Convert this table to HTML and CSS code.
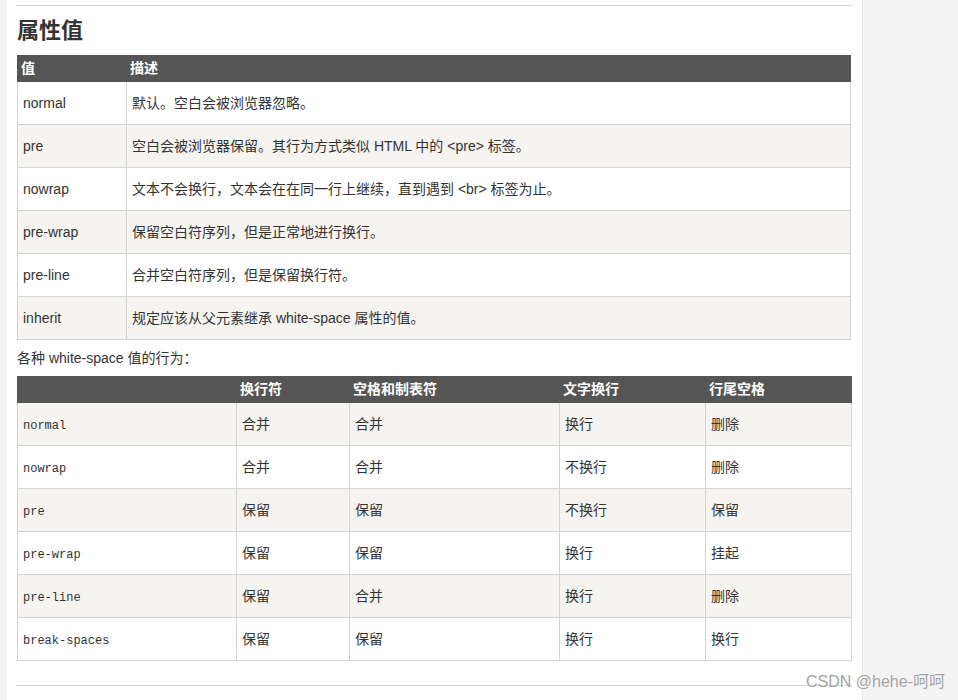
FILE: index.html
```html
<!DOCTYPE html>
<html lang="zh">
<head>
<meta charset="utf-8">
<title>white-space 属性值</title>
<link rel="stylesheet" href="styles.css">
</head>
<body>
<div class="page">
  <div class="left-strip"></div>
  <main class="main">
    <hr class="rule">
    <h2 class="title">属性值</h2>
    <table class="ref ref-values">
      <colgroup><col class="c-val"><col></colgroup>
      <tr><th>值</th><th>描述</th></tr>
      <tr class="w"><td>normal</td><td>默认。空白会被浏览器忽略。</td></tr>
      <tr class="g"><td>pre</td><td>空白会被浏览器保留。其行为方式类似 HTML 中的 &lt;pre&gt; 标签。</td></tr>
      <tr class="w"><td>nowrap</td><td>文本不会换行，文本会在在同一行上继续，直到遇到 &lt;br&gt; 标签为止。</td></tr>
      <tr class="g"><td>pre-wrap</td><td>保留空白符序列，但是正常地进行换行。</td></tr>
      <tr class="w"><td>pre-line</td><td>合并空白符序列，但是保留换行符。</td></tr>
      <tr class="g"><td>inherit</td><td>规定应该从父元素继承 white-space 属性的值。</td></tr>
    </table>
    <p class="note">各种 white-space 值的行为：</p>
    <table class="ref ref-behave">
      <colgroup><col class="b1"><col class="b2"><col class="b3"><col class="b4"><col class="b5"></colgroup>
      <tr><th></th><th>换行符</th><th>空格和制表符</th><th>文字换行</th><th>行尾空格</th></tr>
      <tr class="g"><td class="code">normal</td><td>合并</td><td>合并</td><td>换行</td><td>删除</td></tr>
      <tr class="w"><td class="code">nowrap</td><td>合并</td><td>合并</td><td>不换行</td><td>删除</td></tr>
      <tr class="g"><td class="code">pre</td><td>保留</td><td>保留</td><td>不换行</td><td>保留</td></tr>
      <tr class="w"><td class="code">pre-wrap</td><td>保留</td><td>保留</td><td>换行</td><td>挂起</td></tr>
      <tr class="g"><td class="code">pre-line</td><td>保留</td><td>合并</td><td>换行</td><td>删除</td></tr>
      <tr class="w"><td class="code">break-spaces</td><td>保留</td><td>保留</td><td>换行</td><td>换行</td></tr>
    </table>
    <hr class="rule rule-bottom">
  </main>
  <aside class="side"></aside>
</div>
<div class="watermark">CSDN @hehe-呵呵</div>
</body>
</html>
```
FILE: styles.css
```css
html, body {
  margin: 0;
  padding: 0;
  height: 100%;
  overflow: hidden;
}
body {
  background: #f4f4f4;
  font-family: "Liberation Sans", Arial, "Noto Sans CJK SC", sans-serif;
  font-size: 14px;
  color: #333;
}
.page {
  display: flex;
  min-height: 100%;
}
.left-strip {
  width: 7px;
  flex: 0 0 7px;
  background: #f4f4f4;
}
.main {
  flex: 0 0 834px;
  background: #fff;
  padding: 5px 10px 20px;
}
.side {
  flex: 1;
  background: #f4f4f4;
  border-left: 1px solid #e9e9e9;
}
.rule {
  border: 0;
  border-top: 1px solid #d4d4d4;
  margin: 0;
  height: 0;
}
.title {
  font-size: 22px;
  font-weight: bold;
  line-height: 30px;
  margin: 10px 0 9px;
  color: #333;
}
.ref {
  width: 834px;
  border-collapse: collapse;
  table-layout: fixed;
}
.ref th {
  background: #555;
  color: #fff;
  border: 1px solid #555;
  font-size: 14px;
  font-weight: bold;
  line-height: 19px;
  height: 19px;
  padding: 3px;
  text-align: left;
  vertical-align: top;
  overflow: hidden;
}
.ref td {
  border: 1px solid #d4d4d4;
  padding: 7px 5px;
  line-height: 28px;
  vertical-align: top;
}
.ref tr.g td { background: #f6f4f0; }
.ref tr.w td { background: #fff; }
.ref td.code {
  font-family: "Liberation Mono", "Courier New", monospace;
  font-size: 12px;
  line-height: 28px;
  padding-top: 9px;
  padding-bottom: 5px;
}
.c-val { width: 109px; }
.b1 { width: 219px; }
.b2 { width: 113px; }
.b3 { width: 210px; }
.b4 { width: 146px; }
.b5 { width: 146px; }
.note {
  margin: 7px 0 7px;
  line-height: 22px;
}
.rule-bottom {
  margin-top: 24px;
}
.watermark {
  position: absolute;
  left: 806px;
  top: 671px;
  font-family: "Liberation Sans", Arial, "Noto Sans CJK SC", sans-serif;
  font-size: 16px;
  line-height: 22px;
  color: #a3a3a3;
  text-shadow: 0 0 1px #fff;
}
```
